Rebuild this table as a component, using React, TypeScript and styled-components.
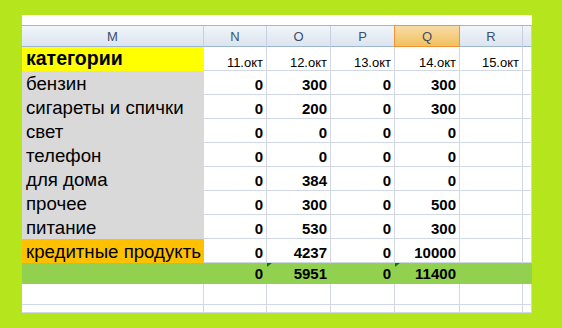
import { ReactElement } from 'react';
import styled, { createGlobalStyle } from 'styled-components';

const GlobalStyle = createGlobalStyle`
  html, body {
    margin: 0;
    padding: 0;
    background: #b5e61d;
  }
  body {
    font-family: 'Liberation Sans', Arial, sans-serif;
  }
`;

const Page = styled.div`
  width: 562px;
  height: 328px;
  padding: 15px 30px 15px 22px;
  box-sizing: border-box;
`;

const Sheet = styled.div`
  width: 510px;
  height: 298px;
  background: #ffffff;
  overflow: hidden;
`;

const TopStrip = styled.div`
  height: 10px;
`;

const Grid = styled.div`
  display: grid;
  grid-template-columns: 182px 63px 64px 64px 65px 63px 9px;
  grid-template-rows: 22px repeat(9, 24px) 21px 21px 8px;
`;

const HeaderCell = styled.div<{ $selected?: boolean }>`
  box-sizing: border-box;
  display: flex;
  align-items: center;
  justify-content: center;
  padding-top: 1px;
  font-size: 13px;
  color: #3b4f6b;
  border-top: 1px solid ${(p) => (p.$selected ? '#f29436' : '#9eb6ce')};
  border-bottom: 1px solid ${(p) => (p.$selected ? '#f29436' : '#9eb6ce')};
  border-right: 1px solid ${(p) => (p.$selected ? '#f29436' : '#c5d1e0')};
  border-left: ${(p) => (p.$selected ? '1px solid #f29436' : 'none')};
  margin-left: ${(p) => (p.$selected ? '-1px' : '0')};
  background: ${(p) =>
    p.$selected
      ? 'linear-gradient(#f9dba5, #f1c15f)'
      : 'linear-gradient(#f1f5fa, #dbe4f0)'};
`;

const Cell = styled.div<{ $fill?: string; $left?: boolean; $pad?: number }>`
  position: relative;
  box-sizing: border-box;
  display: flex;
  align-items: flex-end;
  justify-content: ${(p) => (p.$left ? 'flex-start' : 'flex-end')};
  padding: 0 3px ${(p) => p.$pad ?? 0}px ${(p) => (p.$left ? '4px' : '0')};
  background: ${(p) => p.$fill ?? '#ffffff'};
  border-right: 1px solid ${(p) => p.$fill ?? '#d0d7e5'};
  border-bottom: 1px solid ${(p) => p.$fill ?? '#d0d7e5'};
  white-space: nowrap;
  overflow: visible;
  color: #000000;
`;

const Label = styled.span<{ $bold?: boolean }>`
  font-size: ${(p) => (p.$bold ? '19.5px' : '18.67px')};
  line-height: 1;
  font-weight: ${(p) => (p.$bold ? 700 : 400)};
`;

const Num = styled.span`
  font-size: 15px;
  line-height: 1;
  font-weight: 700;
  padding-bottom: 2px;
`;

const DateText = styled.span`
  font-size: 13px;
  line-height: 1;
  padding-bottom: 1px;
`;

const ErrorMark = styled.span`
  position: absolute;
  left: 0;
  top: 0;
  width: 0;
  height: 0;
  border-top: 4px solid #008000;
  border-right: 5px solid transparent;
`;

const GRAY = '#d9d9d9';
const GREEN = '#92d050';

const columns = ['M', 'N', 'O', 'P', 'Q', 'R', ''];
const dates = ['11.окт', '12.окт', '13.окт', '14.окт', '15.окт'];

const rows: { name: string; fill: string; values: string[] }[] = [
  { name: 'бензин', fill: GRAY, values: ['0', '300', '0', '300'] },
  { name: 'сигареты и спички', fill: GRAY, values: ['0', '200', '0', '300'] },
  { name: 'свет', fill: GRAY, values: ['0', '0', '0', '0'] },
  { name: 'телефон', fill: GRAY, values: ['0', '0', '0', '0'] },
  { name: 'для дома', fill: GRAY, values: ['0', '384', '0', '0'] },
  { name: 'прочее', fill: GRAY, values: ['0', '300', '0', '500'] },
  { name: 'питание', fill: GRAY, values: ['0', '530', '0', '300'] },
  { name: 'кредитные продукть', fill: '#ffc000', values: ['0', '4237', '0', '10000'] },
];

const totals = ['0', '5951', '0', '11400'];

const App = (): ReactElement => {
  return (
    <>
      <GlobalStyle />
      <Page>
        <Sheet>
          <TopStrip />
          <Grid>
            {columns.map((c) => (
              <HeaderCell key={`h${c}`} $selected={c === 'Q'}>
                {c}
              </HeaderCell>
            ))}

            <Cell $fill="#ffff00" $left $pad={2}>
              <Label $bold>категории</Label>
            </Cell>
            {dates.map((d) => (
              <Cell key={d}>
                <DateText>{d}</DateText>
              </Cell>
            ))}
            <Cell />

            {rows.map((r) => (
              <Row key={r.name} name={r.name} fill={r.fill} values={r.values} />
            ))}

            <Cell $fill={GREEN} />
            {totals.map((t, i) => (
              <Cell key={`t${i}`} $fill={GREEN}>
                {(i === 1 || i === 3) && <ErrorMark />}
                <Num>{t}</Num>
              </Cell>
            ))}
            <Cell $fill={GREEN} />
            <Cell $fill={GREEN} />

            {[0, 1].map((k) =>
              columns.map((c) => <Cell key={`e${k}${c}`} />)
            )}
          </Grid>
        </Sheet>
      </Page>
    </>
  );
};

const Row = ({
  name,
  fill,
  values,
}: {
  name: string;
  fill: string;
  values: string[];
}): ReactElement => {
  return (
    <>
      <Cell $fill={fill} $left>
        <Label>{name}</Label>
      </Cell>
      {values.map((v, i) => (
        <Cell key={i}>
          <Num>{v}</Num>
        </Cell>
      ))}
      <Cell />
      <Cell />
    </>
  );
};

export default App;
